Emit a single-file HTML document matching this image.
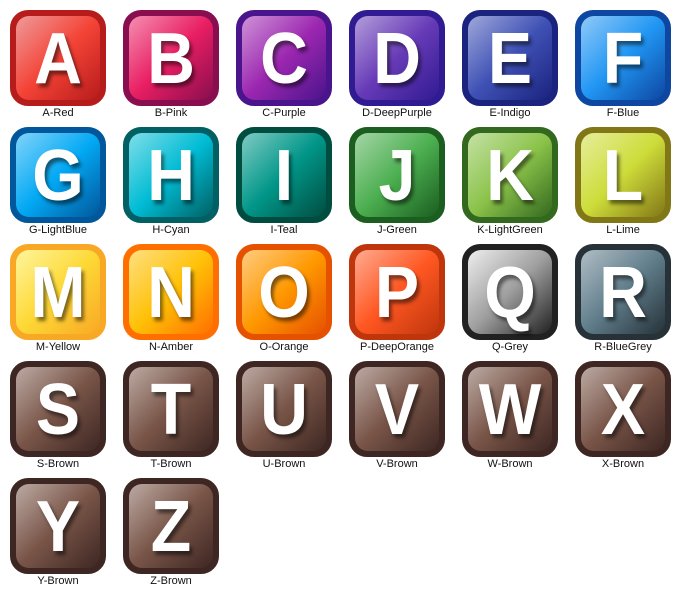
<!DOCTYPE html>
<html><head><style>
body{margin:0;width:681px;height:596px;background:#fff;position:relative;overflow:hidden;font-family:"Liberation Sans",sans-serif}
.i{position:absolute;width:113px;height:117px}
.b{position:absolute;left:10px;top:10px;width:84px;height:84px;border:6px solid var(--d);border-radius:18px;background:var(--d)}
.g{position:absolute;left:0;top:0;width:84px;height:84px;border-radius:13px;background:linear-gradient(135deg,var(--l) 0%,var(--m) 50%,var(--d) 100%);color:#fff;font-weight:bold;font-size:72px;line-height:86px;text-align:center;text-shadow:3px 4px 4px rgba(0,0,0,.5)}
.g span{display:inline-block;transform:scaleX(.92)}
.t{position:absolute;left:0;top:107px;width:116px;text-align:center;font-size:11px;color:#111}
</style></head><body>
<div class="i" style="left:0;top:0;--l:#ef9a9a;--m:#f44336;--d:#b71c1c"><div class="b"><div class="g"><span>A</span></div></div><div class="t">A-Red</div></div>
<div class="i" style="left:113px;top:0;--l:#f48fb1;--m:#e91e63;--d:#880e4f"><div class="b"><div class="g"><span>B</span></div></div><div class="t">B-Pink</div></div>
<div class="i" style="left:226px;top:0;--l:#ce93d8;--m:#9c27b0;--d:#4a148c"><div class="b"><div class="g"><span>C</span></div></div><div class="t">C-Purple</div></div>
<div class="i" style="left:339px;top:0;--l:#b39ddb;--m:#673ab7;--d:#311b92"><div class="b"><div class="g"><span>D</span></div></div><div class="t">D-DeepPurple</div></div>
<div class="i" style="left:452px;top:0;--l:#9fa8da;--m:#3f51b5;--d:#1a237e"><div class="b"><div class="g"><span>E</span></div></div><div class="t">E-Indigo</div></div>
<div class="i" style="left:565px;top:0;--l:#90caf9;--m:#2196f3;--d:#0d47a1"><div class="b"><div class="g"><span>F</span></div></div><div class="t">F-Blue</div></div>

<div class="i" style="left:0;top:117px;--l:#81d4fa;--m:#03a9f4;--d:#01579b"><div class="b"><div class="g"><span>G</span></div></div><div class="t">G-LightBlue</div></div>
<div class="i" style="left:113px;top:117px;--l:#80deea;--m:#00bcd4;--d:#006064"><div class="b"><div class="g"><span>H</span></div></div><div class="t">H-Cyan</div></div>
<div class="i" style="left:226px;top:117px;--l:#80cbc4;--m:#009688;--d:#004d40"><div class="b"><div class="g"><span>I</span></div></div><div class="t">I-Teal</div></div>
<div class="i" style="left:339px;top:117px;--l:#a5d6a7;--m:#4caf50;--d:#1b5e20"><div class="b"><div class="g"><span>J</span></div></div><div class="t">J-Green</div></div>
<div class="i" style="left:452px;top:117px;--l:#c5e1a5;--m:#8bc34a;--d:#33691e"><div class="b"><div class="g"><span>K</span></div></div><div class="t">K-LightGreen</div></div>
<div class="i" style="left:565px;top:117px;--l:#e6ee9c;--m:#cddc39;--d:#827717"><div class="b"><div class="g"><span>L</span></div></div><div class="t">L-Lime</div></div>

<div class="i" style="left:0;top:234px;--l:#fff59d;--m:#fdd835;--d:#f9a825"><div class="b"><div class="g"><span>M</span></div></div><div class="t">M-Yellow</div></div>
<div class="i" style="left:113px;top:234px;--l:#ffe082;--m:#ffc107;--d:#ff6f00"><div class="b"><div class="g"><span>N</span></div></div><div class="t">N-Amber</div></div>
<div class="i" style="left:226px;top:234px;--l:#ffcc80;--m:#ff9800;--d:#e65100"><div class="b"><div class="g"><span>O</span></div></div><div class="t">O-Orange</div></div>
<div class="i" style="left:339px;top:234px;--l:#ffab91;--m:#ff5722;--d:#bf360c"><div class="b"><div class="g"><span>P</span></div></div><div class="t">P-DeepOrange</div></div>
<div class="i" style="left:452px;top:234px;--l:#eeeeee;--m:#9e9e9e;--d:#212121"><div class="b"><div class="g"><span>Q</span></div></div><div class="t">Q-Grey</div></div>
<div class="i" style="left:565px;top:234px;--l:#b0bec5;--m:#607d8b;--d:#263238"><div class="b"><div class="g"><span>R</span></div></div><div class="t">R-BlueGrey</div></div>

<div class="i" style="left:0;top:351px;--l:#bcaaa4;--m:#795548;--d:#3e2723"><div class="b"><div class="g"><span>S</span></div></div><div class="t">S-Brown</div></div>
<div class="i" style="left:113px;top:351px;--l:#bcaaa4;--m:#795548;--d:#3e2723"><div class="b"><div class="g"><span>T</span></div></div><div class="t">T-Brown</div></div>
<div class="i" style="left:226px;top:351px;--l:#bcaaa4;--m:#795548;--d:#3e2723"><div class="b"><div class="g"><span>U</span></div></div><div class="t">U-Brown</div></div>
<div class="i" style="left:339px;top:351px;--l:#bcaaa4;--m:#795548;--d:#3e2723"><div class="b"><div class="g"><span>V</span></div></div><div class="t">V-Brown</div></div>
<div class="i" style="left:452px;top:351px;--l:#bcaaa4;--m:#795548;--d:#3e2723"><div class="b"><div class="g"><span>W</span></div></div><div class="t">W-Brown</div></div>
<div class="i" style="left:565px;top:351px;--l:#bcaaa4;--m:#795548;--d:#3e2723"><div class="b"><div class="g"><span>X</span></div></div><div class="t">X-Brown</div></div>

<div class="i" style="left:0;top:468px;--l:#bcaaa4;--m:#795548;--d:#3e2723"><div class="b"><div class="g"><span>Y</span></div></div><div class="t">Y-Brown</div></div>
<div class="i" style="left:113px;top:468px;--l:#bcaaa4;--m:#795548;--d:#3e2723"><div class="b"><div class="g"><span>Z</span></div></div><div class="t">Z-Brown</div></div>
</body></html>
